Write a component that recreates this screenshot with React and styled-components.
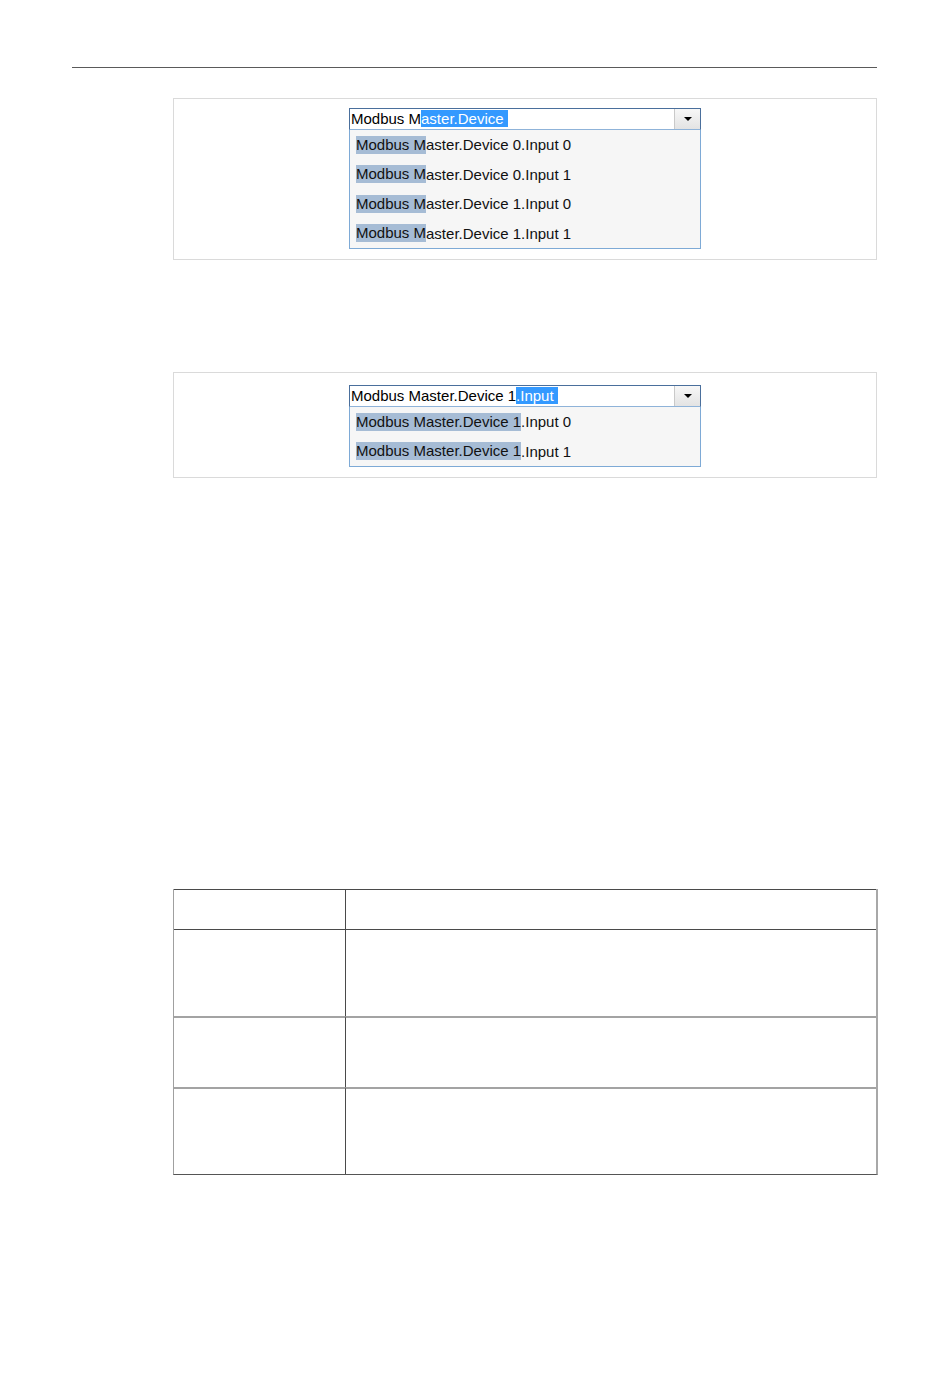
import styled, { createGlobalStyle } from 'styled-components';

const Global = createGlobalStyle`
	body {
		margin: 0;
		background: #fff;
		font-family: "Liberation Sans", Arial, sans-serif;
	}
`;

const Page = styled.div`
	width: 950px;
	height: 1387px;
	padding-top: 67px;
	box-sizing: border-box;
`;

const Rule = styled.div`
	margin-left: 72px;
	width: 805px;
	height: 1px;
	background: #5a5a5a;
`;

const Panel = styled.div`
	margin-left: 173px;
	width: 704px;
	box-sizing: border-box;
	margin-top: ${(p) => p.$top}px;
	padding: ${(p) => p.$padTop}px 0 10px;
	border: 1px solid #dadada;
	display: flex;
	justify-content: center;
`;

const Combo = styled.div`
	width: 352px;
	display: flex;
	flex-direction: column;
`;

const InputRow = styled.div`
	height: 22px;
	box-sizing: border-box;
	border: 1px solid #4a6f9c;
	border-bottom-color: #8fb3d9;
	display: flex;
	background: #fff;
`;

const InputText = styled.div`
	flex: 1;
	font-size: 15px;
	line-height: 20px;
	padding-left: 1px;
	color: #000;
	white-space: pre;
`;

const Selected = styled.span`
	background: #3399ff;
	color: #fff;
	padding-right: 4px;
`;

const DropButton = styled.div`
	width: 25px;
	border-left: 1px solid #c9c9c9;
	background: linear-gradient(#f7f7f7, #e3e3e3);
	display: flex;
	align-items: center;
	justify-content: center;
`;

const Arrow = styled.div`
	width: 0;
	height: 0;
	border-left: 4px solid transparent;
	border-right: 4px solid transparent;
	border-top: 4px solid #000;
`;

const List = styled.div`
	border: 1px solid #7eaad6;
	border-top: none;
	background: #f6f6f6;
	padding-left: 6px;
	display: flex;
	flex-direction: column;
`;

const Item = styled.div`
	height: 29.5px;
	display: flex;
	align-items: center;
	font-size: 15px;
	color: #111;
	white-space: pre;
`;

const Match = styled.span`
	background: #a6bcd5;
	line-height: 18px;
`;

const Table = styled.div`
	margin: 411px 0 0 173px;
	width: 705px;
	box-sizing: border-box;
	border-left: 1px solid #a0a0a0;
	border-right: 2px solid #a8a8a8;
	border-bottom: 1px solid #555;
	display: grid;
	grid-template-columns: 171px 1fr;
`;

const Cell = styled.div`
	height: ${(p) => p.$h}px;
	box-sizing: border-box;
	border-top: ${(p) => (p.$soft ? '2px solid #a3a3a3' : '1px solid #4a4a4a')};
	border-left: ${(p) => (p.$right ? '1px solid #4a4a4a' : 'none')};
`;

const Combobox = ({ typed, selected, items, matchLen }) => (
	<Combo>
		<InputRow>
			<InputText>
				{typed}
				<Selected>{selected}</Selected>
			</InputText>
			<DropButton>
				<Arrow />
			</DropButton>
		</InputRow>
		<List>
			{items.map((text) => (
				<Item key={text}>
					<Match>{text.slice(0, matchLen)}</Match>
					{text.slice(matchLen)}
				</Item>
			))}
		</List>
	</Combo>
);

const rows = [
	{ h: 40, soft: false },
	{ h: 87, soft: false },
	{ h: 71, soft: true },
	{ h: 87, soft: true },
];

export default function App() {
	return (
		<Page>
			<Global />
			<Rule />
			<Panel $top={30} $padTop={9}>
				<Combobox
					typed="Modbus M"
					selected="aster.Device"
					matchLen={8}
					items={[
						'Modbus Master.Device 0.Input 0',
						'Modbus Master.Device 0.Input 1',
						'Modbus Master.Device 1.Input 0',
						'Modbus Master.Device 1.Input 1',
					]}
				/>
			</Panel>
			<Panel $top={112} $padTop={12}>
				<Combobox
					typed="Modbus Master.Device 1"
					selected=".Input"
					matchLen={22}
					items={['Modbus Master.Device 1.Input 0', 'Modbus Master.Device 1.Input 1']}
				/>
			</Panel>
			<Table>
				{rows.map((r, i) => [
					<Cell key={`a${i}`} $h={r.h} $soft={r.soft} />,
					<Cell key={`b${i}`} $h={r.h} $soft={r.soft} $right />,
				])}
			</Table>
		</Page>
	);
}
